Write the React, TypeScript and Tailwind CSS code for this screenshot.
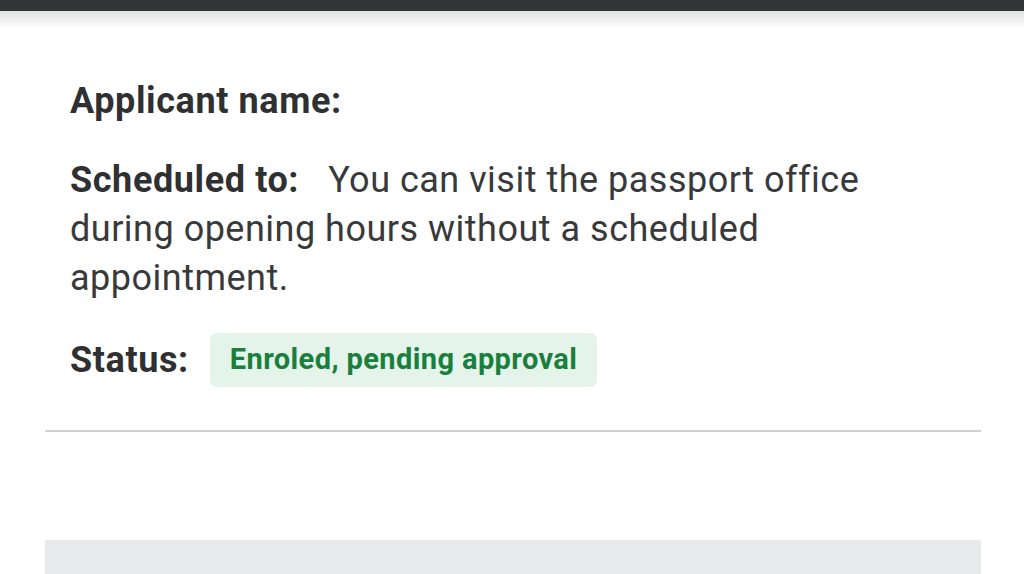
import React from "react";

export default function App() {
  return (
    <div className="w-[1024px] h-[574px] overflow-hidden bg-white" style={{ fontFamily: "Roboto, 'Noto Sans', sans-serif" }}>
      <div className="h-[11px] bg-[#333438]" />
      <div className="h-[18px] bg-gradient-to-b from-[#e2e3e4] to-white" />
      <div className="ml-[45px] w-[936px]">
        <div className="px-[25px] pt-[48px] text-[#2f3032] tracking-[0.6px]">
          <div className="text-[36px] font-bold leading-[49px]">Applicant name:</div>
          <div className="mt-[30px] text-[36px] leading-[49px] text-[#38393b] tracking-[0.5px]">
            <span className="font-bold text-[#2f3032] mr-[29px] tracking-[0.6px]">Scheduled to:</span>
            You can visit the passport office during opening hours without a scheduled appointment.
          </div>
          <div className="mt-[30px] flex items-center h-[54px]">
            <span className="text-[36px] font-bold leading-[49px]">Status:</span>
            <span className="ml-[21px] h-[54px] flex items-center px-[20px] rounded-[7px] bg-[#e5f4ea] text-[#1a7f3c] text-[29px] font-bold tracking-[0.4px]">
              Enroled, pending approval
            </span>
          </div>
        </div>
        <div className="mt-[43px] h-[2px] bg-[#d0d1d2]" />
        <div className="mt-[108px] h-[40px] bg-[#e8eaeb]" />
      </div>
    </div>
  );
}
